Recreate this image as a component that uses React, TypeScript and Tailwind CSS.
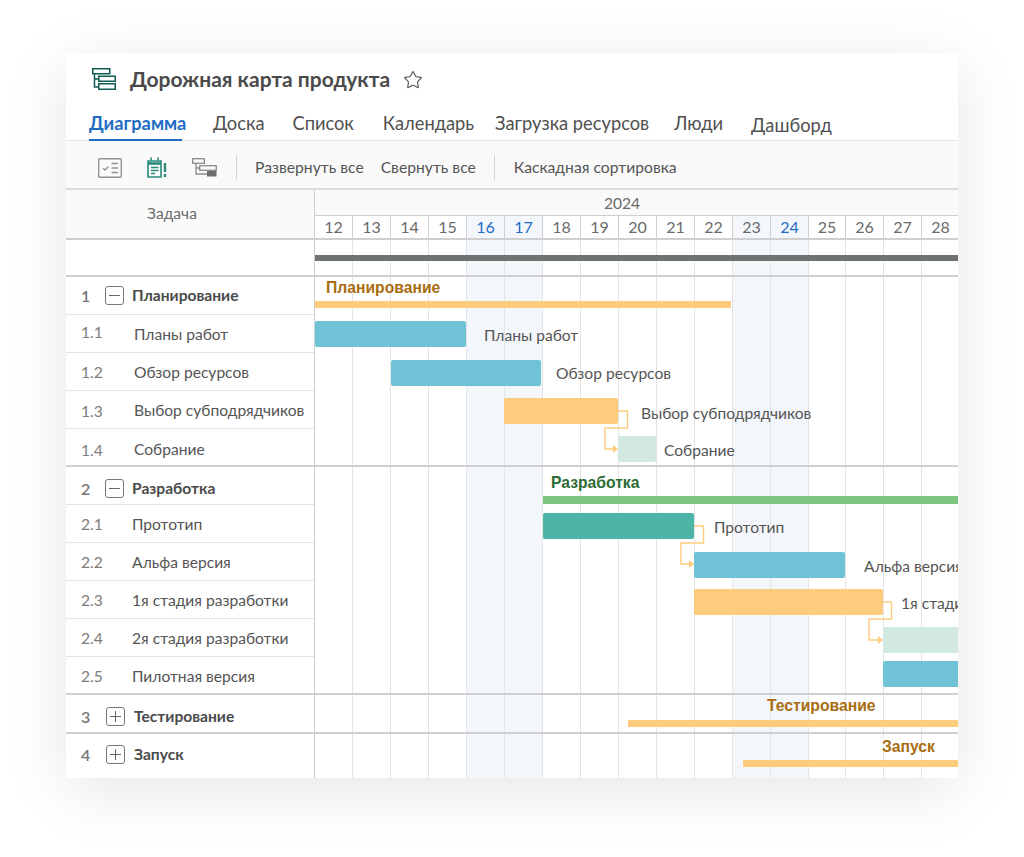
import { Star } from 'lucide-react';

const dayCols = [
  { d: 12, w: 38 }, { d: 13, w: 38 }, { d: 14, w: 38 }, { d: 15, w: 38 },
  { d: 16, w: 38, off: true, blue: true }, { d: 17, w: 38, off: true, blue: true },
  { d: 18, w: 38 }, { d: 19, w: 38 }, { d: 20, w: 38 }, { d: 21, w: 38 }, { d: 22, w: 38 },
  { d: 23, w: 38, off: true }, { d: 24, w: 38, off: true, blue: true },
  { d: 25, w: 37 }, { d: 26, w: 38 }, { d: 27, w: 38 }, { d: 28, w: 38 },
];

const groups = [
  {
    num: '1', name: 'Планирование', open: true, h: 'h-[38px]', pt: 'pt-[0px]', boxMl: 'ml-[9px]', nameMl: 'ml-[8px]',
    rows: [
      { num: '1.1', name: 'Планы работ', h: 'h-[38px]', numPt: 'pb-[1px]', namePt: 'pt-[3px]', ml: 'ml-[30px]' },
      { num: '1.2', name: 'Обзор ресурсов', h: 'h-[38px]', numPt: 'pt-[2px]', namePt: 'pt-[2px]', ml: 'ml-[30px]' },
      { num: '1.3', name: 'Выбор субподрядчиков', h: 'h-[38px]', numPt: 'pt-[5px]', namePt: 'pt-[3px]', ml: 'ml-[30px]' },
      { num: '1.4', name: 'Собрание', h: 'h-[36px]', numPt: 'pt-[7px]', namePt: 'pt-[5px]', ml: 'ml-[30px]' },
    ],
  },
  {
    num: '2', name: 'Разработка', open: true, h: 'h-[38px]', pt: 'pt-[6px]', boxMl: 'ml-[9px]', nameMl: 'ml-[8px]',
    rows: [
      { num: '2.1', name: 'Прототип', h: 'h-[38px]', numPt: 'pt-[2px]', namePt: 'pt-[2px]', ml: 'ml-[28px]' },
      { num: '2.2', name: 'Альфа версия', h: 'h-[38px]', numPt: 'pt-[2px]', namePt: 'pt-[2px]', ml: 'ml-[28px]' },
      { num: '2.3', name: '1я стадия разработки', h: 'h-[38px]', numPt: 'pt-[2px]', namePt: 'pt-[2px]', ml: 'ml-[28px]' },
      { num: '2.4', name: '2я стадия разработки', h: 'h-[38px]', numPt: 'pt-[2px]', namePt: 'pt-[2px]', ml: 'ml-[28px]' },
      { num: '2.5', name: 'Пилотная версия', h: 'h-[36px]', numPt: 'pt-[3px]', namePt: 'pt-[3px]', ml: 'ml-[28px]' },
    ],
  },
  { num: '3', name: 'Тестирование', open: false, h: 'h-[37px]', pt: 'pt-[6px]', boxMl: 'ml-[10px]', nameMl: 'ml-[9px]', rows: [] },
  { num: '4', name: 'Запуск', open: false, h: 'h-[44px]', pt: 'pb-[3px]', boxMl: 'ml-[10px]', nameMl: 'ml-[9px]', rows: [] },
];

const GanttIcon = () => (
  <svg width="24" height="22" viewBox="0 0 24 22" fill="none" stroke="#0f5c52" strokeWidth="1.500">
    <rect x="0.750" y="0.750" width="17" height="5" />
    <rect x="6.750" y="8.250" width="16.500" height="5" />
    <rect x="6.750" y="15.750" width="16.500" height="5.500" />
    <path d="M2.500 6v13h4M2.500 11h4" />
  </svg>
);

const ChecklistIcon = () => (
  <svg width="24" height="20" viewBox="0 0 24 20" fill="none" stroke="#949494" strokeWidth="1.400">
    <rect x="0.700" y="0.700" width="22.600" height="18.600" rx="1" />
    <path d="M5 10l2 2 3.500-3.500" />
    <path d="M13.500 5.500h6.500M13.500 10h6.500M13.500 14.500h6.500" strokeWidth="1.600" />
  </svg>
);

const CalendarIcon = () => (
  <svg width="20" height="21" viewBox="0 0 20 21" fill="none" stroke="#2a8a7c" strokeWidth="1.600">
    <path d="M1 4h13v16H1z" />
    <path d="M1 6.500h13" strokeWidth="2.600" />
    <path d="M4 0.500v3M11 0.500v3M4 10.500h7.500M4 13.500h7.500M4 16.500h4" />
    <path d="M18 6v9M18 17v3" strokeWidth="2.400" />
  </svg>
);

const TreeIcon = () => (
  <svg width="25" height="19" viewBox="0 0 25 19" fill="none" stroke="#8a8a8a" strokeWidth="1.300">
    <rect x="0.700" y="0.700" width="11.600" height="4.600" />
    <rect x="7.700" y="7.700" width="16.600" height="4.600" />
    <rect x="15" y="13" width="9.500" height="5.500" fill="#6e6e6e" stroke="none" />
    <path d="M4 5.500v10.500h11M4 10h4" />
  </svg>
);

const Expander = ({ open }: { open: boolean }) => (
  <div className="w-[19px] h-[19px] shrink-0 rounded-[3px] border border-[#777] flex items-center justify-center">
    <svg width="11" height="11" viewBox="0 0 11 11" stroke="#666" strokeWidth="1">
      <path d="M0 5.500h11" />
      {!open && <path d="M5.500 0v11" />}
    </svg>
  </div>
);

const Connector = ({ d, tip }: { d: string; tip: string }) => (
  <>
    <path d={d} fill="none" stroke="#ffcb7d" strokeWidth="1.400" />
    <path d={tip} fill="#ffcb7d" />
  </>
);

export default function App() {
  return (
    <div className="w-[1024px] h-[857px] bg-white pl-[66px] pt-[53px] overflow-hidden font-['Lato','Noto_Sans',sans-serif] text-[#555]">
      <div className="w-[892px] h-[725px] bg-white shadow-[0_12px_60px_rgba(0,0,0,0.10)] flex flex-col overflow-hidden">
        <div className="h-[53px] shrink-0 flex items-center pl-[26px] pb-[1px]">
          <GanttIcon />
          <h1 className="ml-[14px] pb-[2px] text-[21px] font-bold text-[#4a4a4a] leading-none">Дорожная карта продукта</h1>
          <Star size={20} strokeWidth={1.400} className="ml-[13px] mt-[2px] text-[#555]" />
        </div>
        <div className="h-[35px] shrink-0 flex pl-[23px] border-b border-[#e6e6e6] text-[18.300px] text-[#505050]">
          <div className="h-[35px] border-b-[2px] border-[#1f6cc4] text-[#1f6cc4] font-bold pt-[5px] leading-[24px] w-[93px] whitespace-nowrap">Диаграмма</div>
          <div className="ml-[31px] pt-[5px] leading-[24px]">Доска</div>
          <div className="ml-[28px] pt-[5px] leading-[24px]">Список</div>
          <div className="ml-[29px] pt-[5px] leading-[24px]">Календарь</div>
          <div className="ml-[21px] pt-[5px] leading-[24px]">Загрузка ресурсов</div>
          <div className="ml-[25px] pt-[5px] leading-[24px]">Люди</div>
          <div className="ml-[28px] pt-[7px] leading-[24px]">Дашборд</div>
        </div>
        <div className="h-[49px] shrink-0 flex items-center bg-[#fafafa] border-b-2 border-[#dcdcdc] pl-[32px] pt-[6px] text-[15.700px] text-[#555]">
          <ChecklistIcon />
          <div className="ml-[25px]"><CalendarIcon /></div>
          <div className="ml-[25px]"><TreeIcon /></div>
          <div className="ml-[19px] w-px h-[25px] bg-[#d4d4d4]" />
          <span className="ml-[18px]">Развернуть все</span>
          <span className="ml-[17px]">Свернуть все</span>
          <div className="ml-[18px] w-px h-[25px] bg-[#d4d4d4]" />
          <span className="ml-[19px]">Каскадная сортировка</span>
        </div>
        <div className="flex-1 flex min-h-0">
          <div className="w-[249px] shrink-0 flex flex-col border-r border-[#cfcfcf]">
            <div className="h-[50px] shrink-0 bg-[#fafafa] border-b-2 border-[#cfcfcf] flex items-center justify-center pr-[36px] text-[15.600px] text-[#6a6a6a]">Задача</div>
            <div className="h-[37px] shrink-0 border-b-2 border-[#cfcfcf]" />
            {groups.map((g, gi) => (
              <div key={g.num} className={gi < 3 ? 'border-b-2 border-[#cfcfcf] shrink-0' : 'shrink-0'}>
                <div className={`${g.h} flex items-center pl-[15px] ${g.pt} ${g.rows.length ? 'border-b border-[#e4e4e4]' : ''}`}>
                  <span className="w-[15px] text-[16px] font-semibold text-[#777]">{g.num}</span>
                  <div className={g.boxMl}><Expander open={g.open} /></div>
                  <span className={`${g.nameMl} text-[15.600px] font-bold text-[#4a4a4a]`}>{g.name}</span>
                </div>
                {g.rows.map((r, i) => (
                  <div key={r.num} className={`${r.h} flex items-center pl-[15px] ${i < g.rows.length - 1 ? 'border-b border-[#e4e4e4]' : ''}`}>
                    <span className={`w-[23px] text-[15.600px] text-[#7d7d7d] ${r.numPt}`}>{r.num}</span>
                    <span className={`${r.ml} text-[15.600px] whitespace-nowrap ${r.namePt}`}>{r.name}</span>
                  </div>
                ))}
              </div>
            ))}
          </div>
          <div className="flex-1 min-w-0 flex flex-col overflow-hidden">
            <div className="h-[50px] shrink-0 border-b-2 border-[#cfcfcf] flex flex-col">
              <div className="h-[26px] bg-[#fafafa] border-b border-[#cfcfcf] text-center text-[15.600px] text-[#6a6a6a] leading-[26px] pr-[29px]">2024</div>
              <div className="flex-1 flex">
                {dayCols.map((c) => (
                  <div
                    key={c.d}
                    style={{ width: c.w }}
                    className={`shrink-0 border-r border-[#cfcfcf] text-center text-[16px] leading-[22px] ${c.off ? 'bg-[#f3f6fb]' : ''} ${c.blue ? 'text-[#1f6cc4]' : 'text-[#6a6a6a]'}`}
                  >
                    {c.d}
                  </div>
                ))}
              </div>
            </div>
            <div className="relative flex-1 min-h-0">
              <div className="absolute inset-0 flex">
                {dayCols.map((c) => (
                  <div key={c.d} style={{ width: c.w }} className={`shrink-0 border-r border-[#e4e4e4] ${c.off ? 'bg-[#f3f6fb]' : ''}`} />
                ))}
              </div>
              <div className="absolute inset-0 flex flex-col">
                <div className="h-[37px] shrink-0 border-b-2 border-[#cfcfcf]" />
                <div className="h-[190px] shrink-0 border-b-2 border-[#cfcfcf]" />
                <div className="h-[228px] shrink-0 border-b-2 border-[#cfcfcf]" />
                <div className="h-[39px] shrink-0 border-b-2 border-[#cfcfcf]" />
              </div>
              {/* bars sit on the timeline, offsets are relative to the chart canvas */}
              <div className="absolute left-0 right-0 top-[15px] h-[6px] bg-[#6f7372]" />

              <div className="absolute left-[11px] top-[39px] text-[15.700px] font-bold leading-[18px] font-['Liberation_Sans',sans-serif] text-[#a86d10]">Планирование</div>
              <div className="absolute left-0 w-[416px] top-[61px] h-[7px] bg-[#ffcb7d]" />
              <div className="absolute left-0 w-[151px] top-[81px] h-[26px] rounded-[2px] bg-[#70c3d6]" />
              <div className="absolute left-[169px] top-[84px] text-[15.600px] whitespace-nowrap">Планы работ</div>
              <div className="absolute left-[76px] w-[150px] top-[120px] h-[26px] rounded-[2px] bg-[#70c3d6]" />
              <div className="absolute left-[241px] top-[122px] text-[15.600px] whitespace-nowrap">Обзор ресурсов</div>
              <div className="absolute left-[189px] w-[114px] top-[158px] h-[26px] rounded-[2px] bg-[#ffcb7d]" />
              <div className="absolute left-[326px] top-[162px] text-[15.600px] whitespace-nowrap">Выбор субподрядчиков</div>
              <div className="absolute left-[303px] w-[38px] top-[196px] h-[26px] rounded-[2px] bg-[#d2e8e2]" />
              <div className="absolute left-[349px] top-[199px] text-[15.600px] whitespace-nowrap">Собрание</div>

              <div className="absolute left-[236px] top-[234px] text-[15.700px] font-bold leading-[18px] font-['Liberation_Sans',sans-serif] text-[#2d6b35]">Разработка</div>
              <div className="absolute left-[228px] right-0 top-[256px] h-[8px] bg-[#7cc682]" />
              <div className="absolute left-[228px] w-[151px] top-[273px] h-[26px] rounded-[2px] bg-[#4cb5a8]" />
              <div className="absolute left-[399px] top-[276px] text-[15.600px] whitespace-nowrap">Прототип</div>
              <div className="absolute left-[379px] w-[151px] top-[312px] h-[26px] rounded-[2px] bg-[#70c3d6]" />
              <div className="absolute left-[549px] top-[315px] text-[15.600px] whitespace-nowrap">Альфа версия</div>
              <div className="absolute left-[379px] w-[189px] top-[349px] h-[26px] rounded-[2px] bg-[#ffcb7d]" />
              <div className="absolute left-[586px] top-[352px] text-[15.600px] whitespace-nowrap">1я стадия разработки</div>
              <div className="absolute left-[568px] right-0 top-[387px] h-[26px] rounded-l-[2px] bg-[#d2e8e2]" />
              <div className="absolute left-[568px] right-0 top-[421px] h-[26px] rounded-l-[2px] bg-[#70c3d6]" />

              <div className="absolute left-[452px] top-[457px] text-[15.700px] font-bold leading-[18px] font-['Liberation_Sans',sans-serif] text-[#a86d10]">Тестирование</div>
              <div className="absolute left-[313px] right-0 top-[480px] h-[7px] bg-[#ffcb7d]" />
              <div className="absolute left-[567px] top-[498px] text-[15.700px] font-bold leading-[18px] font-['Liberation_Sans',sans-serif] text-[#a86d10]">Запуск</div>
              <div className="absolute left-[428px] right-0 top-[520px] h-[7px] bg-[#ffcb7d]" />

              <svg className="absolute inset-0" width="643" height="538">
                <Connector d="M303 171h9.500v17h-22.500v21h10" tip="M303 209l-5-4v8z" />
                <Connector d="M379 286h9.500v17h-22.500v21h10" tip="M379 324l-5-4v8z" />
                <Connector d="M568 362h8.500v17h-22.500v21h10" tip="M568 400l-5-4v8z" />
              </svg>
            </div>
          </div>
        </div>
      </div>
    </div>
  );
}
